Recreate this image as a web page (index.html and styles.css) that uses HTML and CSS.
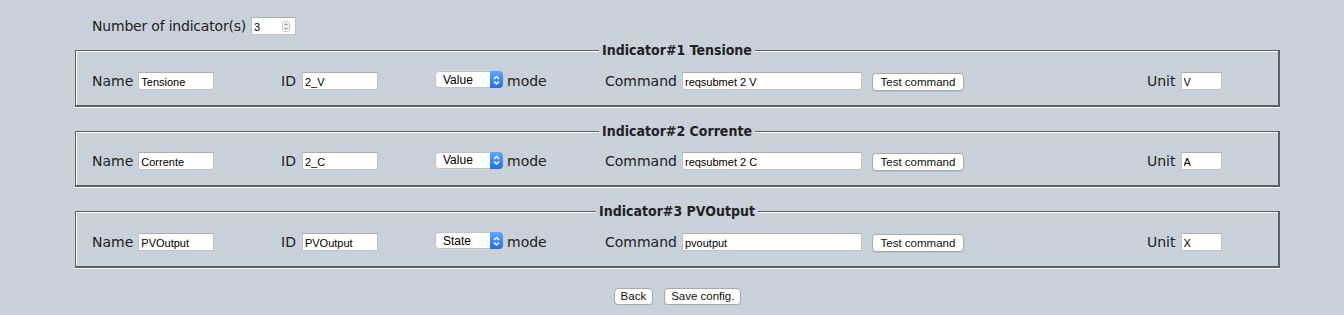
FILE: index.html
```html
<!DOCTYPE html>
<html>
<head>
  <title>Indicators configuration</title>
  <link rel="stylesheet" href="styles.css">
</head>
<body>
  <div class="page">
    <div class="count">
      <label for="count">Number of indicator(s)</label>
      <span class="spin">
        <input id="count" class="field num" type="text" value="3">
        <span class="spin-arrows">
          <svg width="8" height="11" viewBox="0 0 8 11"><rect x="0.5" y="0.5" width="7" height="10" rx="2.5" fill="#fff" stroke="#c4c4c4"/><path d="M2.3 4.3 4 2.6 5.7 4.3M2.3 6.7 4 8.4 5.7 6.7" fill="none" stroke="#444" stroke-width="0.9"/></svg>
        </span>
      </span>
    </div>

    <fieldset class="indicator">
      <legend>Indicator#1 Tensione</legend>
      <div class="row">
        <div class="cell"><label>Name</label><input class="field w-name" type="text" value="Tensione"></div>
        <div class="cell id"><label>ID</label><input class="field w-id" type="text" value="2_V"></div>
        <div class="cell mode">
          <span class="select"><select><option>Value</option><option>State</option></select><span class="select-arrow"><svg width="13" height="16" viewBox="0 0 13 16"><path d="M4 7 6.5 4.5 9 7M4 9.5 6.5 12 9 9.5" fill="none" stroke="#fff" stroke-width="1.4"/></svg></span></span>
          <span>mode</span>
        </div>
        <div class="cell"><label>Command</label><input class="field w-cmd" type="text" value="reqsubmet 2 V"><button class="btn test">Test command</button></div>
        <div class="cell"><label>Unit</label><input class="field w-unit" type="text" value="V"></div>
      </div>
    </fieldset>

    <fieldset class="indicator">
      <legend>Indicator#2 Corrente</legend>
      <div class="row">
        <div class="cell"><label>Name</label><input class="field w-name" type="text" value="Corrente"></div>
        <div class="cell id"><label>ID</label><input class="field w-id" type="text" value="2_C"></div>
        <div class="cell mode">
          <span class="select"><select><option>Value</option><option>State</option></select><span class="select-arrow"><svg width="13" height="16" viewBox="0 0 13 16"><path d="M4 7 6.5 4.5 9 7M4 9.5 6.5 12 9 9.5" fill="none" stroke="#fff" stroke-width="1.4"/></svg></span></span>
          <span>mode</span>
        </div>
        <div class="cell"><label>Command</label><input class="field w-cmd" type="text" value="reqsubmet 2 C"><button class="btn test">Test command</button></div>
        <div class="cell"><label>Unit</label><input class="field w-unit" type="text" value="A"></div>
      </div>
    </fieldset>

    <fieldset class="indicator">
      <legend>Indicator#3 PVOutput</legend>
      <div class="row">
        <div class="cell"><label>Name</label><input class="field w-name" type="text" value="PVOutput"></div>
        <div class="cell id"><label>ID</label><input class="field w-id" type="text" value="PVOutput"></div>
        <div class="cell mode">
          <span class="select"><select><option>State</option><option>Value</option></select><span class="select-arrow"><svg width="13" height="16" viewBox="0 0 13 16"><path d="M4 7 6.5 4.5 9 7M4 9.5 6.5 12 9 9.5" fill="none" stroke="#fff" stroke-width="1.4"/></svg></span></span>
          <span>mode</span>
        </div>
        <div class="cell"><label>Command</label><input class="field w-cmd" type="text" value="pvoutput"><button class="btn test">Test command</button></div>
        <div class="cell"><label>Unit</label><input class="field w-unit" type="text" value="X"></div>
      </div>
    </fieldset>

    <div class="actions">
      <button class="btn">Back</button>
      <button class="btn">Save config.</button>
    </div>
  </div>
</body>
</html>
```

FILE: styles.css
```css
body {
  margin: 0;
  background-color: #c9d1da;
  color: #222;
  font-family: "DejaVu Sans", sans-serif;
  font-size: 14px;
}

.page {
  padding: 17px 64px 0 75px;
}

.count {
  display: flex;
  align-items: center;
  gap: 5px;
  height: 18px;
  padding-left: 17px;
}

.count label {
  letter-spacing: -0.2px;
}

.spin {
  position: relative;
  display: inline-flex;
}

.spin-arrows {
  position: absolute;
  right: 6px;
  top: 4px;
  display: flex;
}

.field {
  box-sizing: border-box;
  height: 18px;
  margin: 0;
  padding: 2px 2px 0 2px;
  border: 1px solid #c2c2c2;
  border-top-color: #adadad;
  border-radius: 0;
  background: #fff;
  color: #000;
  font-family: "Liberation Sans", Arial, sans-serif;
  font-size: 11px;
  outline: none;
}

.num {
  width: 45px;
}

.w-name,
.w-id {
  width: 76px;
}

.w-cmd {
  width: 180px;
}

.w-unit {
  width: 41px;
}

.indicator {
  min-width: 0;
  margin: 7px 0 0 0;
  padding: 11.5px 16px 16px 16px;
  border-style: solid;
  border-width: 1px 2px 2px 1px;
  border-color: #5c6066;
  box-shadow: inset 1px 1px 0 #fff, 0 1px 0 #fff;
}

.indicator + .indicator {
  margin-top: 16px;
}

.indicator legend {
  margin: 0 auto;
  padding: 0 3px;
  background-color: #c9d1da;
  font-family: "DejaVu Sans Condensed", "DejaVu Sans", sans-serif;
  font-weight: bold;
  font-size: 14px;
  line-height: 17px;
}

.row {
  display: grid;
  grid-template-columns: 189px 154px 170px 542px auto;
  align-items: center;
  height: 18px;
}

.cell {
  display: flex;
  align-items: center;
  gap: 5px;
}

.cell.id {
  gap: 6px;
}

.cell.mode {
  gap: 4px;
}

.select {
  position: relative;
  display: inline-flex;
  margin-bottom: 2px;
}

.select select {
  appearance: none;
  -webkit-appearance: none;
  box-sizing: border-box;
  width: 68px;
  height: 17px;
  margin: 0;
  padding: 0 0 0 7px;
  border: 1px solid #c4c4c4;
  border-radius: 4px;
  background: #fff;
  color: #000;
  font-family: "Liberation Sans", Arial, sans-serif;
  font-size: 12px;
  outline: none;
}

.select-arrow {
  position: absolute;
  top: 0;
  right: 0;
  width: 13px;
  height: 17px;
  display: flex;
  align-items: center;
  justify-content: center;
  border-radius: 0 4px 4px 0;
  background: linear-gradient(#62a6fb, #1f6fe6);
}

.btn {
  box-sizing: border-box;
  height: 17px;
  margin: 0;
  padding: 0 6px;
  border: 1px solid #a9a9a9;
  border-radius: 4px;
  background: #fff;
  color: #111;
  font-family: "Liberation Sans", Arial, sans-serif;
  font-size: 11.5px;
  line-height: 15px;
  box-shadow: 0 1px 0 rgba(0,0,0,0.08);
}

.btn.test {
  width: 92px;
  height: 18px;
  margin: 2px 0 0 5px;
  line-height: 16px;
}

.actions {
  display: flex;
  justify-content: center;
  gap: 11px;
  margin-top: 20px;
}
```
